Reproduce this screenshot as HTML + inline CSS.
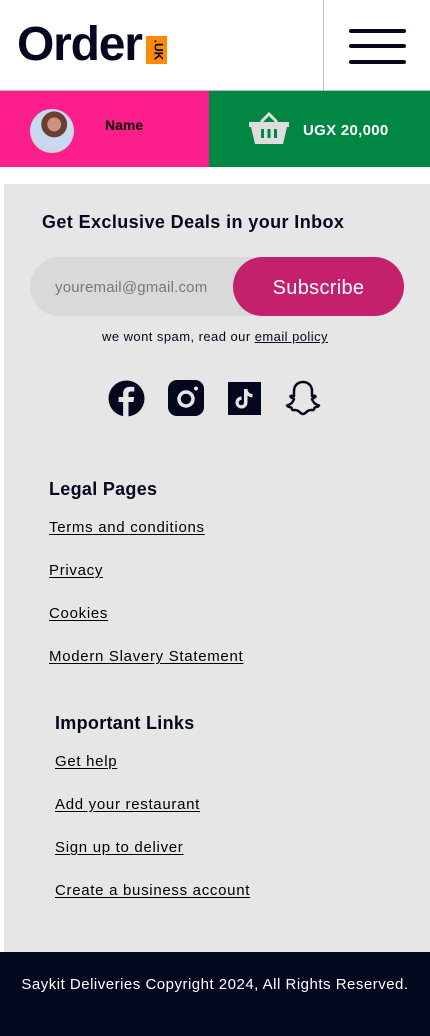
<!DOCTYPE html>
<html><head><meta charset="utf-8"><style>
*{margin:0;padding:0;box-sizing:border-box}
body{width:430px;height:1036px;background:#fff;font-family:"Liberation Sans",sans-serif;position:relative;overflow:hidden;color:#03081F}
.a{position:absolute}
.u{text-decoration:underline;font-size:15px;color:#000;text-underline-offset:2px;letter-spacing:0.7px}
</style></head><body>
<div class="a" style="left:0;top:0;width:430px;height:91px;border-bottom:1px solid #bbb"></div>
<div class="a" style="left:323px;top:0;width:1px;height:91px;background:#bbb"></div>
<div class="a" style="left:17px;top:19px;font-size:48px;font-weight:bold;letter-spacing:-1.2px;color:#03081F;line-height:52px">Order</div>
<div class="a" style="left:146px;top:36px;width:21px;height:28px;background:#FC8A06"><div style="transform:rotate(90deg);font-size:12px;font-weight:bold;position:absolute;left:2px;top:7px">.UK</div></div>
<div class="a" style="left:349px;top:29px;width:57px;height:4px;border-radius:2px;background:#03081F"></div>
<div class="a" style="left:349px;top:44px;width:57px;height:4px;border-radius:2px;background:#03081F"></div>
<div class="a" style="left:349px;top:60px;width:57px;height:4px;border-radius:2px;background:#03081F"></div>
<div class="a" style="left:0;top:91px;width:209px;height:76px;background:#FC1E8A"></div>
<div class="a" style="left:30px;top:109px;width:44px;height:44px;border-radius:50%;background:radial-gradient(circle at 55% 35%,#c99580 0 18%,#6b4030 19% 34%,#c8d8ee 35% 70%,#d8d0cc 71%)"></div>
<div class="a" style="left:105px;top:117px;font-size:14px;font-weight:bold;color:#000">Name</div>
<div class="a" style="left:209px;top:91px;width:221px;height:76px;background:#028643"></div>
<svg class="a" style="left:249px;top:108px" width="40" height="38" viewBox="0 0 40 38"><path d="M12 14 L20 6 L28 14" stroke="#ddd" stroke-width="3" fill="none"/><path d="M0 14 H40 V19 H38 L34 36 H6 L2 19 H0Z" fill="#ddd"/><rect x="12" y="21" width="3" height="9" fill="#028643"/><rect x="18.5" y="21" width="3" height="9" fill="#028643"/><rect x="25" y="21" width="3" height="9" fill="#028643"/></svg>
<div class="a" style="left:303px;top:122px;font-size:15px;font-weight:bold;color:#fff;letter-spacing:0.3px">UGX 20,000</div>
<div class="a" style="left:4px;top:184px;width:426px;height:768px;background:#e6e6e6"></div>
<div class="a" style="left:42px;top:212px;font-size:18px;font-weight:bold;letter-spacing:0.4px">Get Exclusive Deals in your Inbox</div>
<div class="a" style="left:30px;top:257px;width:260px;height:59px;border-radius:30px;background:#d9d9d9"></div>
<div class="a" style="left:55px;top:279px;font-size:15px;color:#777;letter-spacing:0.2px">youremail@gmail.com</div>
<div class="a" style="left:233px;top:257px;width:171px;height:59px;border-radius:30px;background:#C5206B;color:#fff;font-size:20px;text-align:center;line-height:62px;letter-spacing:0.3px">Subscribe</div>
<div class="a" style="left:0;top:329px;width:430px;text-align:center;font-size:13px;letter-spacing:0.45px">we wont spam, read our <u>email policy</u></div>
<svg class="a" style="left:108px;top:380px" width="37" height="37" viewBox="0 0 37 37"><circle cx="18.5" cy="18.5" r="18" fill="#03081F"/><path d="M20.5 37V22h5l.7-5h-5.7v-3c0-1.5.6-2.5 2.6-2.5h3.2V7c-.6-.1-2.3-.3-4.2-.3-4.2 0-7 2.5-7 7V17h-4.5v5h4.5v15z" fill="#e6e6e6"/></svg>
<svg class="a" style="left:168px;top:380px" width="36" height="36" viewBox="0 0 36 36"><rect width="36" height="36" rx="9" fill="#03081F"/><circle cx="18" cy="19" r="7" stroke="#e6e6e6" stroke-width="3.5" fill="none"/><circle cx="28" cy="8.5" r="2" fill="#e6e6e6"/></svg>
<svg class="a" style="left:228px;top:382px" width="33" height="33" viewBox="0 0 33 33"><rect width="33" height="33" fill="#03081F"/><path d="M16 7h3.5c.3 3 2 4.8 5 5v3.3c-1.9 0-3.5-.6-5-1.6v6.8a6 6 0 1 1-6-6v3.4a2.7 2.7 0 1 0 2.5 2.6z" fill="#e6e6e6"/></svg>
<svg class="a" style="left:283px;top:380px" width="40" height="38" viewBox="0 0 40 38"><path d="M20 2c6 0 9 4.5 9 9v5c1.5 0 3-.8 3.5.2.5 1.2-2.5 2-3.5 2.8 1 3.2 3.5 5.7 7 6.5-.5 1.5-3.5 1.5-4.5 2.3-.5 1-.3 2.3-1.5 2.3-2 0-3.5-.5-5.5 1-1.5 1.2-2.7 2.9-4.5 2.9s-3-1.7-4.5-2.9c-2-1.5-3.5-1-5.5-1-1.2 0-1-1.3-1.5-2.3-1-.8-4-.8-4.5-2.3 3.5-.8 6-3.3 7-6.5-1-.8-4-1.6-3.5-2.8.5-1 2-.2 3.5-.2v-5c0-4.5 3-9 9-9z" fill="none" stroke="#03081F" stroke-width="2.5" stroke-linejoin="round"/></svg>
<div class="a" style="left:49px;top:479px;font-size:18px;font-weight:bold;letter-spacing:0.3px">Legal Pages</div>
<div class="a u" style="left:49px;top:519px">Terms and conditions</div>
<div class="a u" style="left:49px;top:562px">Privacy</div>
<div class="a u" style="left:49px;top:605px">Cookies</div>
<div class="a u" style="left:49px;top:648px">Modern Slavery Statement</div>
<div class="a" style="left:55px;top:713px;font-size:18px;font-weight:bold;letter-spacing:0.3px">Important Links</div>
<div class="a u" style="left:55px;top:753px">Get help</div>
<div class="a u" style="left:55px;top:796px">Add your restaurant</div>
<div class="a u" style="left:55px;top:839px">Sign up to deliver</div>
<div class="a u" style="left:55px;top:882px">Create a business account</div>
<div class="a" style="left:0;top:952px;width:430px;height:84px;background:#03081F;color:#fff;font-size:15px;line-height:66px;text-align:center;letter-spacing:0.5px">Saykit Deliveries Copyright 2024, All Rights Reserved.</div>
</body></html>
